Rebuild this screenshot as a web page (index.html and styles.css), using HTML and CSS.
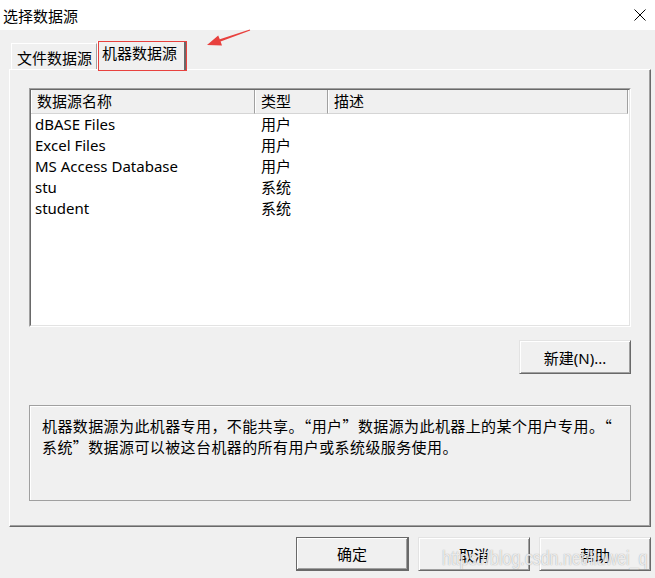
FILE: index.html
```html
<!DOCTYPE html>
<html lang="zh-CN">
<head>
    <meta charset="UTF-8">
    <title>选择数据源</title>
    <link rel="stylesheet" href="styles.css">
</head>
<body>
    <div class="titlebar">
        <span class="title">选择数据源</span>
        <svg class="close" width="12" height="12" viewBox="0 0 12 12">
            <path d="M0.5 0.5 L11.5 11.5 M11.5 0.5 L0.5 11.5" stroke="#000" stroke-width="1" fill="none"/>
        </svg>
    </div>

    <div class="dialog">
        <div class="tabs">
            <div class="tab">文件数据源</div>
            <div class="tab active">机器数据源</div>
        </div>

        <div class="panel">
            <div class="list">
                <div class="list-inner">
                    <div class="list-head">
                        <div class="head-cell col-name">数据源名称</div>
                        <div class="head-cell col-type">类型</div>
                        <div class="head-cell col-desc">描述</div>
                        <div class="head-fill"></div>
                    </div>
                    <div class="row"><span>dBASE Files</span><span>用户</span><span></span></div>
                    <div class="row"><span>Excel Files</span><span>用户</span><span></span></div>
                    <div class="row"><span>MS Access Database</span><span>用户</span><span></span></div>
                    <div class="row"><span>stu</span><span>系统</span><span></span></div>
                    <div class="row"><span>student</span><span>系统</span><span></span></div>
                </div>
            </div>

            <div class="new-row">
                <button class="btn">新建(N)...</button>
            </div>

            <div class="desc">
                机器数据源为此机器专用，不能共享。“用户”数据源为此机器上的某个用户专用。“<br>
                系统”数据源可以被这台机器的所有用户或系统级服务使用。
            </div>
        </div>

        <div class="actions">
            <button class="btn default">确定</button>
            <button class="btn">取消</button>
            <button class="btn">帮助</button>
        </div>
    </div>

    <!-- annotation arrow and watermark from the screenshot -->
    <svg class="arrow" width="655" height="80" viewBox="0 0 655 80">
        <polygon points="207,45 222,45.4 220.6,41.6 250.2,30.4 249.8,29.6 219.8,39.2 218.2,35.4" fill="#e8413e"/>
    </svg>
    <div class="watermark">https://blog.csdn.net/liuwei_q</div>
</body>
</html>
```

FILE: styles.css
```css
* {
    margin: 0;
    padding: 0;
    box-sizing: border-box;
}

body {
    width: 655px;
    height: 578px;
    overflow: hidden;
    position: relative;
    background-color: #f0f0f0;
    color: #000;
    font-family: "Noto Sans", "Noto Sans CJK SC", sans-serif;
    font-size: 15px;
}

.titlebar {
    height: 30px;
    background-color: #fff;
    display: flex;
    align-items: center;
    justify-content: space-between;
    padding: 0 9px 0 3px;
}

.dialog {
    padding: 11px 4px 0 9px;
}

/* tabs */
.tabs {
    display: flex;
    align-items: flex-end;
    height: 28px;
    padding-left: 2px;
}

.tab {
    width: 86px;
    height: 26px;
    padding: 1px 0 0 5px;
    display: flex;
    align-items: center;
    border-top: 1px solid #fff;
    border-left: 1px solid #fff;
    border-right: 1px solid #a0a0a0;
}

.tab.active {
    position: relative;
    z-index: 1;
    width: 89px;
    height: 29px;
    margin-bottom: -1px;
    padding: 0 0 0 4px;
    align-items: flex-start;
    line-height: 22px;
    background-color: #f0f0f0;
    border-right: 2px solid #696969;
}

.tab.active::after {
    content: "";
    position: absolute;
    top: -1px;
    left: 0;
    right: -3px;
    bottom: -1px;
    border: 1px solid #e8413e;
}

.panel {
    height: 458px;
    padding: 18px 19px 0 19px;
    border-top: 1px solid #fff;
    border-left: 1px solid #fff;
    border-right: 1px solid #696969;
    border-bottom: 1px solid #696969;
    box-shadow: inset -1px -1px 0 #a0a0a0;
}

/* list view */
.list {
    height: 239px;
    border: 1px solid;
    border-color: #a0a0a0 #fff #fff #a0a0a0;
}

.list-inner {
    height: 100%;
    background-color: #fff;
    border: 1px solid;
    border-color: #696969 #e3e3e3 #e3e3e3 #696969;
}

.list-head {
    display: flex;
    height: 24px;
    background-color: #f0f0f0;
}

.head-cell {
    height: 24px;
    line-height: 22px;
    padding-left: 6px;
    border-right: 1px solid #a0a0a0;
    border-bottom: 1px solid #d5d5d5;
    box-shadow: inset 1px 0 0 #fff;
}

.col-name { width: 224px; }
.col-type { width: 73px; }
.col-desc { width: 300px; }

.head-fill {
    flex: 1;
    background-color: #fff;
}

.row {
    display: grid;
    grid-template-columns: 224px 73px 1fr;
    height: 21px;
    line-height: 20px;
}

.row span:first-child {
    padding-left: 4px;
}

.row span:nth-child(2) {
    padding-left: 6px;
}

/* buttons */
.btn {
    width: 112px;
    height: 34px;
    font-family: inherit;
    font-size: 15px;
    color: #000;
    background-color: #f0f0f0;
    border: 1px solid;
    border-color: #e3e3e3 #696969 #696969 #e3e3e3;
    box-shadow: inset 1px 1px 0 #fff, inset -1px -1px 0 #a0a0a0;
}

.btn.default {
    width: 113px;
    border-color: #696969;
    border-width: 1px 2px 2px 1px;
}

.new-row {
    display: flex;
    justify-content: flex-end;
    margin-top: 13px;
}

.desc {
    height: 96px;
    margin-top: 31px;
    padding: 9px 12px 0 12px;
    font-family: "Noto Sans CJK SC", sans-serif;
    line-height: 21px;
    letter-spacing: 0.4px;
    border: 1px solid #a0a0a0;
    box-shadow: inset 1px 1px 0 #fff;
}

.actions {
    display: flex;
    justify-content: flex-end;
    gap: 9px;
    margin-top: 10px;
}

/* overlays */
.arrow {
    position: absolute;
    top: 0;
    left: 0;
    pointer-events: none;
}

.watermark {
    position: absolute;
    left: 442px;
    top: 548px;
    font-family: "Liberation Sans", sans-serif;
    font-size: 16px;
    line-height: 22px;
    color: rgba(255, 255, 255, 0.8);
    text-shadow: 0 0 1px rgba(110, 110, 110, 0.7);
    transform: scaleY(1.25);
    pointer-events: none;
}
```
